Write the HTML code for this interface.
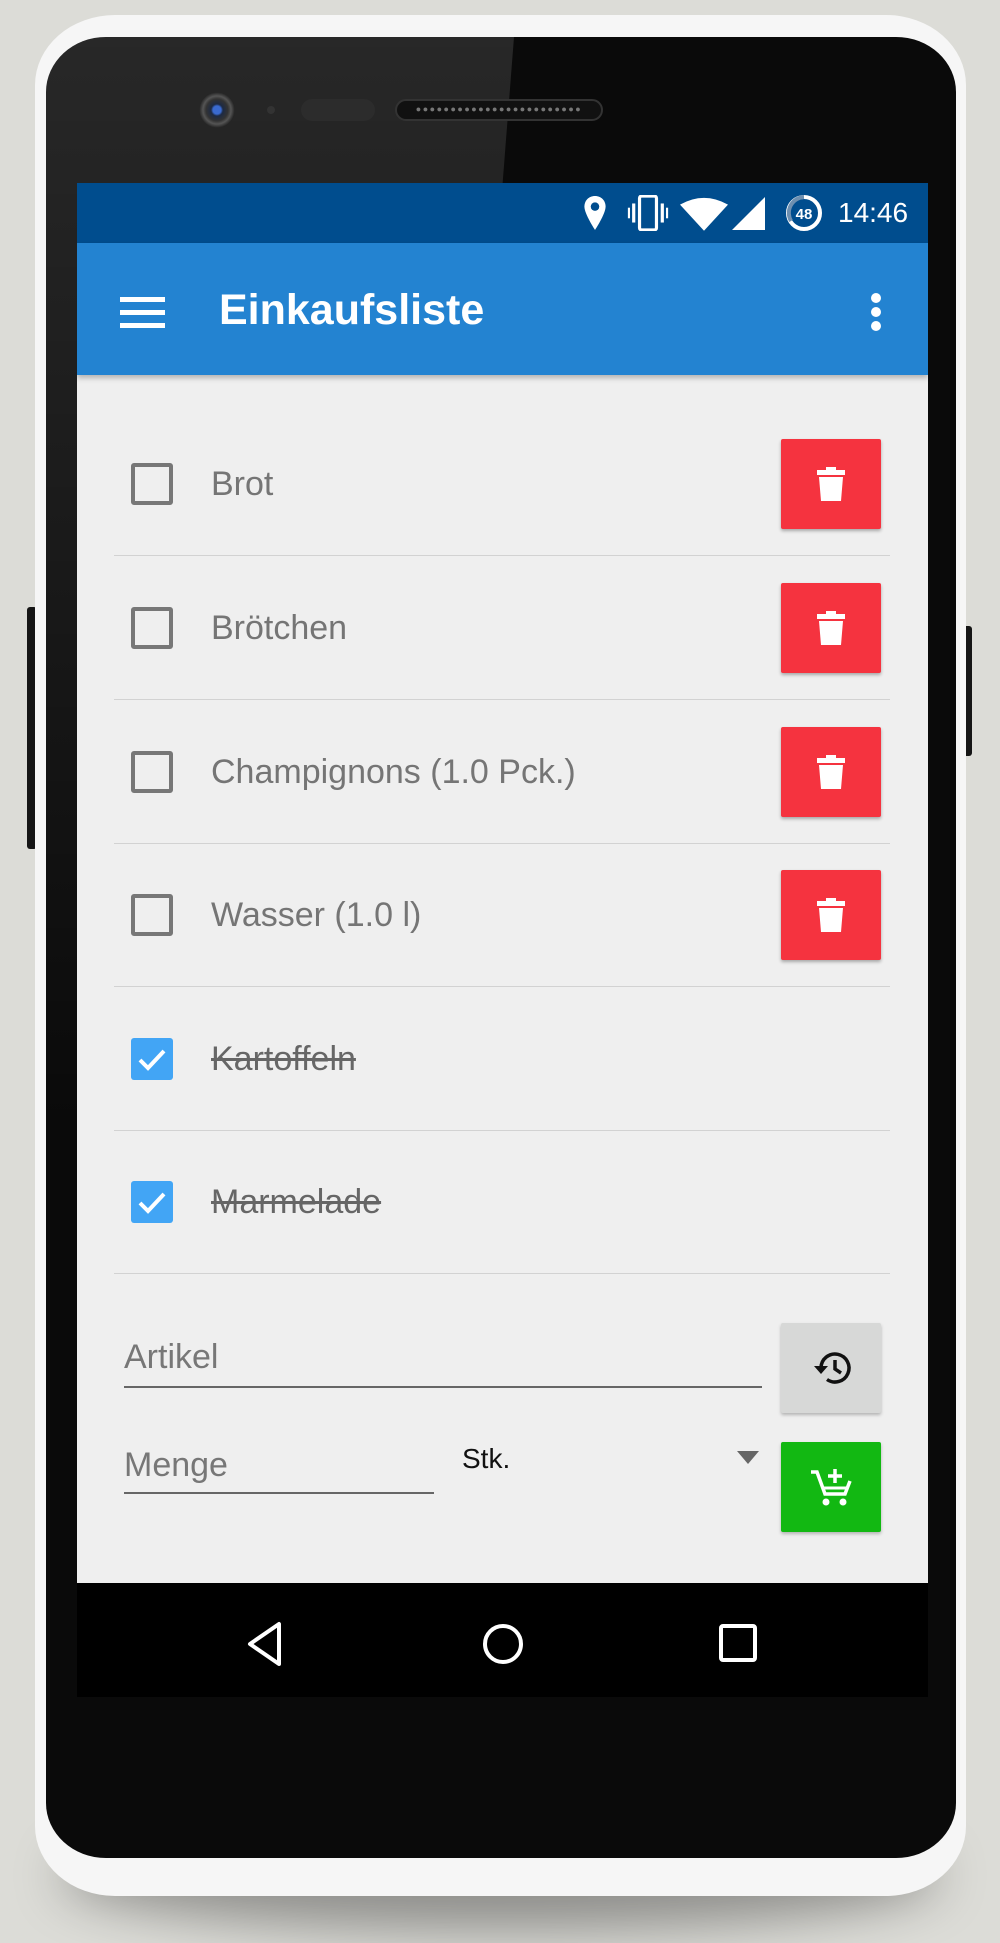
<!DOCTYPE html>
<html><head><meta charset="utf-8"><style>
*{margin:0;padding:0;box-sizing:border-box}
body{width:1000px;height:1943px;background:#dcdcd7;position:relative;overflow:hidden;font-family:"Liberation Sans",Roboto,sans-serif}
.abs{position:absolute}
.shadow{left:60px;top:1820px;width:880px;height:110px;border-radius:50%;background:rgba(0,0,0,.35);filter:blur(25px)}
.body{left:35px;top:15px;width:931px;height:1881px;background:#f6f6f6;border-radius:80px/70px}
.bezel{left:46px;top:37px;width:910px;height:1821px;background:#0a0a0a;border-radius:60px/55px;overflow:hidden}
.screen{left:77px;top:183px;width:851px;height:1514px;background:#efefef;overflow:hidden}
.sb{left:0;top:0;width:851px;height:60px;background:#004d8e}
.ab{left:0;top:60px;width:851px;height:132px;background:#2383d1;box-shadow:0 3px 5px rgba(0,0,0,.25)}
.nav{left:0;top:1400px;width:851px;height:114px;background:#000}
.sep{left:37px;width:776px;height:1px;background:#d2d2d2}
.cb{left:54px;width:42px;height:42px;border:4px solid #777;border-radius:3px}
.cbc{left:54px;width:42px;height:42px;background:#42a5f5;border-radius:3px}
.txt{left:134px;font-size:34px;color:#757575;line-height:40px}
.del{left:704px;width:100px;height:90px;background:#f5333f;border-radius:2px;box-shadow:0 2px 3px rgba(0,0,0,.3)}
.del svg{position:absolute;left:36px;top:28px}
.side{background:#151515;border-radius:3px}
</style></head><body>
<div class="abs shadow"></div>
<div class="abs side" style="left:27px;top:607px;width:10px;height:242px"></div>
<div class="abs side" style="left:963px;top:626px;width:9px;height:130px"></div>
<div class="abs body"></div>
<div class="abs bezel">
  <div class="abs" style="left:0;top:0;width:910px;height:1821px;background:linear-gradient(180deg,rgba(255,255,255,.12),rgba(255,255,255,0) 60%);clip-path:polygon(0 0,468px 0,326px 1821px,0 1821px)"></div>
  <div class="abs" style="left:153px;top:55px;width:36px;height:36px;border-radius:50%;background:radial-gradient(circle,#3a6ad0 0 4px,#1d2a44 6px,#333 11px,#555 14px,#222 18px)"></div>
  <div class="abs" style="left:221px;top:69px;width:8px;height:8px;border-radius:50%;background:#333"></div>
  <div class="abs" style="left:255px;top:62px;width:74px;height:22px;border-radius:11px;background:#2c2c2c"></div>
  <div class="abs" style="left:349px;top:62px;width:208px;height:22px;border-radius:11px;background:#111;border:2px solid #333;font-size:9px;color:#777;letter-spacing:1.5px;text-align:center;line-height:16px;overflow:hidden">●●●●●●●●●●●●●●●●●●●●●●●●</div>
</div>
<div class="abs screen">
  <div class="abs sb">
    <svg class="abs" style="left:505px;top:12px" width="26" height="36" viewBox="0 0 24 34"><path d="M12 1C6 1 2 5.5 2 11c0 7 10 22 10 22s10-15 10-22C22 5.5 18 1 12 1z" fill="#fff"/><circle cx="12" cy="11" r="4" fill="#004d8e"/></svg>
    <svg class="abs" style="left:549px;top:12px" width="44" height="36" viewBox="0 0 38 34"><rect x="11" y="1" width="16" height="32" rx="2" fill="none" stroke="#fff" stroke-width="3"/><rect x="4" y="8" width="3" height="18" fill="#fff"/><rect x="31" y="8" width="3" height="18" fill="#fff"/><rect x="0" y="12" width="2" height="10" fill="#fff"/><rect x="36" y="12" width="2" height="10" fill="#fff"/></svg>
    <svg class="abs" style="left:603px;top:14px" width="48" height="34" viewBox="0 0 46 32"><path d="M0 7Q23-6 46 7L23 32z" fill="#fff"/></svg>
    <svg class="abs" style="left:655px;top:14px" width="33" height="33"><path d="M33 0V33H0z" fill="#fff"/></svg>
    <svg class="abs" style="left:708px;top:11px" width="38" height="38" viewBox="0 0 38 38"><circle cx="19" cy="19" r="16" fill="none" stroke="#fff" stroke-width="4"/><path d="M19 3A16 16 0 0 0 6 27" fill="none" stroke="#6d8fb0" stroke-width="4"/><text x="19" y="25" font-size="15" font-weight="bold" fill="#fff" text-anchor="middle" font-family="Liberation Sans">48</text></svg>
    <div class="abs" style="left:761px;top:12px;font-size:28px;color:#fff;line-height:36px">14:46</div>
  </div>
  <div class="abs ab">
    <div class="abs" style="left:43px;top:54px;width:45px;height:5px;background:#fff"></div>
    <div class="abs" style="left:43px;top:67px;width:45px;height:5px;background:#fff"></div>
    <div class="abs" style="left:43px;top:80px;width:45px;height:5px;background:#fff"></div>
    <div class="abs" style="left:142px;top:42px;font-size:43px;font-weight:bold;color:#fff;line-height:50px">Einkaufsliste</div>
    <div class="abs" style="left:794px;top:50px;width:10px;height:10px;border-radius:50%;background:#fff"></div>
    <div class="abs" style="left:794px;top:64px;width:10px;height:10px;border-radius:50%;background:#fff"></div>
    <div class="abs" style="left:794px;top:78px;width:10px;height:10px;border-radius:50%;background:#fff"></div>
  </div>
  <div class="abs cb" style="top:280px"></div><div class="abs txt" style="top:281px">Brot</div>
  <div class="abs del" style="top:256px"><svg width="28" height="34" viewBox="0 0 28 34"><rect x="0" y="3" width="28" height="5" fill="#fff"/><rect x="9" y="0" width="10" height="5" fill="#fff"/><path d="M2 10H26L24 34H4z" fill="#fff"/></svg></div>
  <div class="abs sep" style="top:372px"></div>
  <div class="abs cb" style="top:424px"></div><div class="abs txt" style="top:425px">Brötchen</div>
  <div class="abs del" style="top:400px"><svg width="28" height="34" viewBox="0 0 28 34"><rect x="0" y="3" width="28" height="5" fill="#fff"/><rect x="9" y="0" width="10" height="5" fill="#fff"/><path d="M2 10H26L24 34H4z" fill="#fff"/></svg></div>
  <div class="abs sep" style="top:516px"></div>
  <div class="abs cb" style="top:568px"></div><div class="abs txt" style="top:569px">Champignons (1.0 Pck.)</div>
  <div class="abs del" style="top:544px"><svg width="28" height="34" viewBox="0 0 28 34"><rect x="0" y="3" width="28" height="5" fill="#fff"/><rect x="9" y="0" width="10" height="5" fill="#fff"/><path d="M2 10H26L24 34H4z" fill="#fff"/></svg></div>
  <div class="abs sep" style="top:660px"></div>
  <div class="abs cb" style="top:711px"></div><div class="abs txt" style="top:712px">Wasser (1.0 l)</div>
  <div class="abs del" style="top:687px"><svg width="28" height="34" viewBox="0 0 28 34"><rect x="0" y="3" width="28" height="5" fill="#fff"/><rect x="9" y="0" width="10" height="5" fill="#fff"/><path d="M2 10H26L24 34H4z" fill="#fff"/></svg></div>
  <div class="abs sep" style="top:803px"></div>
  <div class="abs cbc" style="top:855px"><svg width="42" height="42"><path d="M9 22L17 30L33 13" fill="none" stroke="#fff" stroke-width="4"/></svg></div>
  <div class="abs txt" style="top:856px;color:#666;text-decoration:line-through">Kartoffeln</div>
  <div class="abs sep" style="top:947px"></div>
  <div class="abs cbc" style="top:998px"><svg width="42" height="42"><path d="M9 22L17 30L33 13" fill="none" stroke="#fff" stroke-width="4"/></svg></div>
  <div class="abs txt" style="top:999px;color:#666;text-decoration:line-through">Marmelade</div>
  <div class="abs sep" style="top:1090px"></div>
  <div class="abs" style="left:47px;top:1154px;font-size:34px;color:#777;line-height:40px">Artikel</div>
  <div class="abs" style="left:47px;top:1203px;width:638px;height:2px;background:#666"></div>
  <div class="abs" style="left:704px;top:1140px;width:100px;height:90px;background:#d7d8d7;border-radius:2px;box-shadow:0 2px 3px rgba(0,0,0,.25)">
    <svg class="abs" style="left:30px;top:27px" width="42" height="36" viewBox="0 0 42 36"><path d="M10 18A14 14 0 1 1 16 29.5" fill="none" stroke="#111" stroke-width="3.5"/><path d="M3 16H17L10 24z" fill="#111"/><path d="M24 10V19L30 23" fill="none" stroke="#111" stroke-width="3.5"/></svg>
  </div>
  <div class="abs" style="left:47px;top:1262px;font-size:34px;color:#777;line-height:40px">Menge</div>
  <div class="abs" style="left:47px;top:1309px;width:310px;height:2px;background:#666"></div>
  <div class="abs" style="left:385px;top:1259px;font-size:28px;color:#111;line-height:34px">Stk.</div>
  <svg class="abs" style="left:660px;top:1268px" width="22" height="13"><path d="M0 0H22L11 13z" fill="#666"/></svg>
  <div class="abs" style="left:704px;top:1259px;width:100px;height:90px;background:#12b812;border-radius:2px;box-shadow:0 2px 3px rgba(0,0,0,.25)">
    <svg class="abs" style="left:28px;top:24px" width="44" height="44" viewBox="0 0 44 44"><path d="M2 6H8L16 28H36L41 15" fill="none" stroke="#fff" stroke-width="3.5"/><path d="M14 22H38" stroke="#fff" stroke-width="3"/><circle cx="17" cy="36" r="3.5" fill="#fff"/><circle cx="34" cy="36" r="3.5" fill="#fff"/><path d="M26 3V17M19 10H33" stroke="#fff" stroke-width="3.5"/></svg>
  </div>
  <div class="abs nav">
    <svg class="abs" style="left:169px;top:38px" width="40" height="46"><path d="M33 3V43L4 23z" fill="none" stroke="#fff" stroke-width="4" stroke-linejoin="round"/></svg>
    <svg class="abs" style="left:404px;top:39px" width="44" height="44"><circle cx="22" cy="22" r="18" fill="none" stroke="#fff" stroke-width="4"/></svg>
    <svg class="abs" style="left:641px;top:40px" width="40" height="40"><rect x="3" y="3" width="34" height="34" rx="2" fill="none" stroke="#fff" stroke-width="4"/></svg>
  </div>
</div>
</body></html>
